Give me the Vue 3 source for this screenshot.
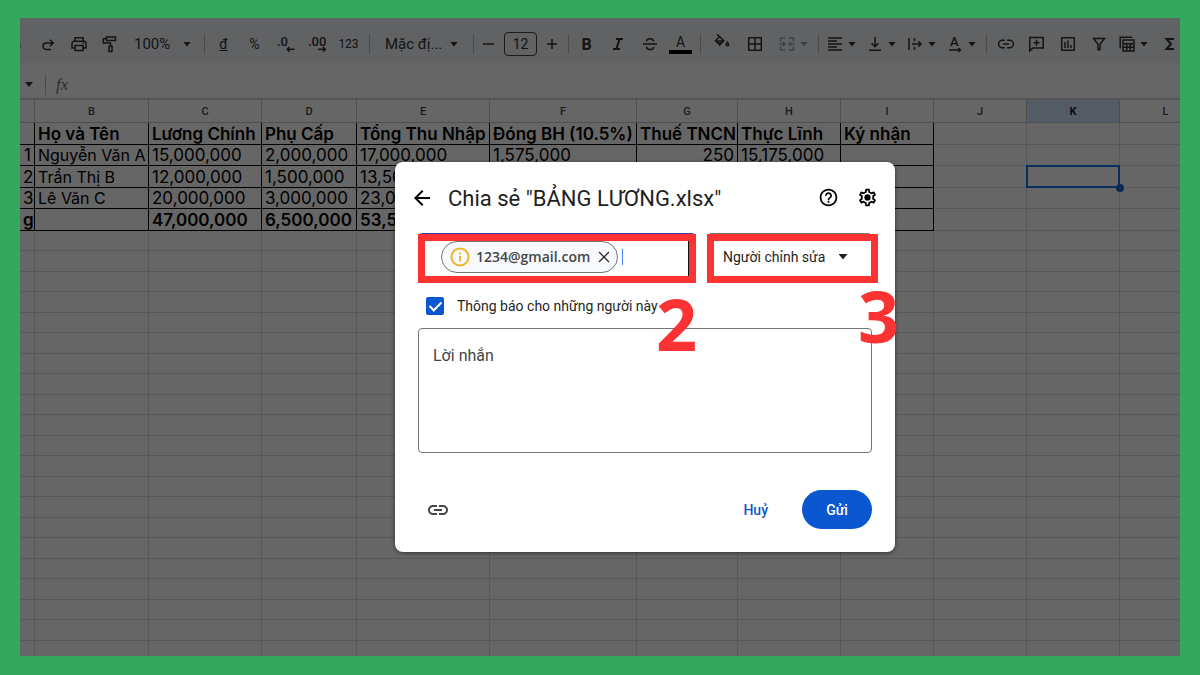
<script setup>
import { ref } from "vue";

const email = ref("");
const role = ref("editor");
const notify = ref(true);
const message = ref("");

// toolbar items, left to right
const tools = [
  { type: "icon", name: "undo", cls: "cut" },
  { type: "icon", name: "redo" },
  { type: "icon", name: "print" },
  { type: "icon", name: "paint" },
  { type: "menu", text: "100%", cls: "zoom" },
  { type: "sep" },
  { type: "text", text: "đ", cls: "currency" },
  { type: "text", text: "%" },
  { type: "icon", name: "decLess" },
  { type: "icon", name: "decMore" },
  { type: "text", text: "123", cls: "format" },
  { type: "sep" },
  { type: "menu", text: "Mặc đị...", cls: "family" },
  { type: "sep" },
  { type: "icon", name: "minus", cls: "step" },
  { type: "size" },
  { type: "icon", name: "plus", cls: "step" },
  { type: "sep" },
  { type: "text", text: "B", cls: "bold" },
  { type: "icon", name: "italic" },
  { type: "icon", name: "strike" },
  { type: "text", text: "A", cls: "color" },
  { type: "sep" },
  { type: "icon", name: "fill", cls: "fill" },
  { type: "icon", name: "borders" },
  { type: "drop", name: "merge", cls: "off" },
  { type: "sep" },
  { type: "drop", name: "align" },
  { type: "drop", name: "valign" },
  { type: "drop", name: "wrap" },
  { type: "drop", name: "rotate" },
  { type: "sep" },
  { type: "icon", name: "link" },
  { type: "icon", name: "comment" },
  { type: "icon", name: "chart" },
  { type: "icon", name: "filter" },
  { type: "drop", name: "table" },
  { type: "icon", name: "sigma" },
];

const icons = {
  undo: { d: "M5 9h6.5a3.2 3.2 0 0 1 0 6.4H7" },
  redo: { d: "M15 9H8.2a3.2 3.2 0 0 0 0 6.4H13M12 5.8 15.2 9 12 12.2" },
  print: { d: "M6 7V3.8h8V7M5.8 14H3V9.4A2.2 2.2 0 0 1 5.2 7.2h9.6A2.2 2.2 0 0 1 17 9.4V14h-2.8M6 11.5h8v5H6zM13.5 9.3h1.5" },
  paint: { d: "M6.5 3h9v3.4h-9zM6.5 4.7H3.3v4.4h7.2v3M9 12.2h3v5.4H9z" },
  decLess: { d: "M18.5 15.3h-7M13.5 13l-2.3 2.3 2.3 2.3", text: ".0" },
  decMore: { d: "M11 15.3h7M16 13l2.3 2.3-2.3 2.3", text: ".00" },
  minus: { d: "M4 10h11" },
  plus: { d: "M4 10h10M9 5v10" },
  italic: { d: "M7 5h7M4 15h7M10.6 5 7.4 15", w: 2 },
  strike: { d: "M3 10h14M13.6 7.4c-.2-1.8-1.6-2.7-3.5-2.7S6.7 5.6 6.6 7.3M6.5 12.8c.2 1.8 1.6 2.7 3.6 2.7s3.5-.9 3.5-2.6" },
  fill: { d: "M5 0 11.8 6.8 7.7 11 3.5 6.8 7.5 2.6M4 7h7.3L7.7 10.5zM6 9h3.5M15.5 8.3c-1 1.3-1.3 1.7-1.3 2.2a1.2 1.2 0 0 0 2.4 0c0-.5-.3-.9-1.1-2.2z" },
  borders: { d: "M3.7 3.7h12.6v12.6H3.7zM10 3.7v12.6M3.7 10h12.6" },
  merge: { d: "M8 4H3.5v3.5M8 16H3.5v-3.5M12 4h4.5v3.5M12 16h4.5v-3.5M2.5 10h5.2M6 8l2 2-2 2M17.5 10h-5.2M14 8l-2 2 2 2" },
  align: { d: "M3 4h14M3 7h9M3 10h14M3 13h9M3 16h14" },
  valign: { d: "M10 3v9.5M6.5 9.2l3.5 3.5 3.5-3.5M4 16.3h12" },
  wrap: { d: "M4 4v12M9.5 4v3.2M9.5 12.8V16M7 10h9M13.3 7.3 16 10l-2.7 2.7" },
  rotate: { d: "M4 16h11M13.3 14l2.2 2-2.2 2", text: "A" },
  link: { d: "M8.8 6.2H6.4a3.8 3.8 0 0 0 0 7.6h2.4M11.2 6.2h2.4a3.8 3.8 0 0 1 0 7.6h-2.4M7 10h6" },
  comment: { d: "M2.8 17V3.5h13.4v10.6H5.7zM9.5 5.8v6M6.5 8.8h6" },
  chart: { d: "M3.7 3.7h12.6v12.6H3.7zM7 8v6M10 6.5V14M13 11v3" },
  filter: { d: "M4.5 4.5h11L11 10.3v5.5H9v-5.5z" },
  table: { d: "M3.2 14.5V3.2h12M6 6h11v11H6zM6 9.7h11M6 13.3h11M9.7 9.7V17M13.3 9.7V17" },
  sigma: { d: "M14 5H6.5l4.5 5-4.5 5H14", w: 2 },
};

const columns = ["", "B", "C", "D", "E", "F", "G", "H", "I", "J", "K", "L"];

const rows = [
  ["", "Họ và Tên", "Lương Chính", "Phụ Cấp", "Tổng Thu Nhập", "Đóng BH (10.5%)", "Thuế TNCN", "Thực Lĩnh", "Ký nhận"],
  ["1", "Nguyễn Văn A", "15,000,000", "2,000,000", "17,000,000", "1,575,000", "250", "15,175,000", ""],
  ["2", "Trần Thị B", "12,000,000", "1,500,000", "13,500,000", "", "", "", ""],
  ["3", "Lê Văn C", "20,000,000", "3,000,000", "23,000,000", "", "", "", ""],
  ["g", "", "47,000,000", "6,500,000", "53,500,000", "", "", "", ""],
];
const emptyRows = 21;
</script>

<template>
  <div class="frame">
    <div class="stage">
      <div class="toolbar">
        <template v-for="(tool, i) in tools" :key="i">
          <span v-if="tool.type === 'sep'" class="sep"></span>
          <input v-else-if="tool.type === 'size'" class="size" value="12" aria-label="Cỡ chữ" />
          <button v-else class="tool" :class="[tool.type, tool.cls]" :aria-label="tool.name">
            <svg v-if="tool.name" viewBox="0 0 20 20" width="20" height="20" :stroke-width="icons[tool.name].w || 1.5">
              <text v-if="icons[tool.name].text" :x="tool.name === 'rotate' ? 5 : 1" y="12">{{ icons[tool.name].text }}</text>
              <path :d="icons[tool.name].d" />
            </svg>
            <span v-else>{{ tool.text }}</span>
            <i v-if="tool.type === 'menu' || tool.type === 'drop'" class="caret"></i>
          </button>
        </template>
      </div>

      <div class="formula">
        <i class="caret"></i>
        <span class="sep"></span>
        <span class="fx">fx</span>
      </div>

      <table class="sheet">
        <colgroup>
          <col v-for="n in 12" :key="n" :class="'c' + n" />
        </colgroup>
        <thead>
          <tr>
            <th v-for="col in columns" :key="col" :class="{ active: col === 'K' }">{{ col }}</th>
          </tr>
        </thead>
        <tbody class="data">
          <tr v-for="(row, r) in rows" :key="r">
            <td v-for="(cell, c) in row" :key="c" class="filled">{{ cell }}</td>
            <td></td>
            <td :class="{ selected: r === 2 }"></td>
            <td></td>
          </tr>
        </tbody>
        <tbody class="empty">
          <tr v-for="n in emptyRows" :key="n">
            <td v-for="c in 12" :key="c"></td>
          </tr>
        </tbody>
      </table>

      <div class="overlay">
        <form class="dialog" @submit.prevent>
          <header>
            <button type="button" class="plain" aria-label="Quay lại">
              <svg viewBox="0 0 24 24" width="24" height="24">
                <path d="M20 11H7.83l5.59-5.59L12 4l-8 8 8 8 1.41-1.41L7.83 13H20v-2z" />
              </svg>
            </button>
            <h1>Chia sẻ "BẢNG LƯƠNG.xlsx"</h1>
            <button type="button" class="plain" aria-label="Trợ giúp">
              <svg viewBox="0 0 24 24" width="21" height="21">
                <path d="M11 18h2v-2h-2v2zm1-16C6.48 2 2 6.48 2 12s4.48 10 10 10 10-4.48 10-10S17.52 2 12 2zm0 18c-4.41 0-8-3.59-8-8s3.59-8 8-8 8 3.59 8 8-3.59 8-8 8zm0-14c-2.21 0-4 1.79-4 4h2c0-1.1.9-2 2-2s2 .9 2 2c0 2-3 1.75-3 5h2c0-2.25 3-2.5 3-5 0-2.21-1.79-4-4-4z" />
              </svg>
            </button>
            <button type="button" class="plain" aria-label="Cài đặt">
              <svg viewBox="0 0 24 24" width="21" height="21">
                <path d="M19.43 12.98c.04-.32.07-.64.07-.98 0-.34-.03-.66-.07-.98l2.11-1.65c.19-.15.24-.42.12-.64l-2-3.46c-.09-.16-.26-.25-.44-.25-.06 0-.12.01-.17.03l-2.49 1c-.52-.4-1.08-.73-1.69-.98l-.38-2.65C14.46 2.18 14.25 2 14 2h-4c-.25 0-.46.18-.49.42l-.38 2.65c-.61.25-1.17.59-1.69.98l-2.49-1c-.06-.02-.12-.03-.18-.03-.17 0-.34.09-.43.25l-2 3.46c-.13.22-.07.49.12.64l2.11 1.65c-.04.32-.07.65-.07.98 0 .33.03.66.07.98l-2.11 1.65c-.19.15-.24.42-.12.64l2 3.46c.09.16.26.25.44.25.06 0 .12-.01.17-.03l2.49-1c.52.4 1.08.73 1.69.98l.38 2.65c.03.24.24.42.49.42h4c.25 0 .46-.18.49-.42l.38-2.65c.61-.25 1.17-.59 1.69-.98l2.49 1c.06.02.12.03.18.03.17 0 .34-.09.43-.25l2-3.46c.12-.22.07-.49-.12-.64l-2.11-1.65zm-1.98-1.71c.04.31.05.52.05.73 0 .21-.02.43-.05.73l-.14 1.13.89.7 1.08.84-.7 1.21-1.27-.51-1.04-.42-.9.68c-.43.32-.84.56-1.25.73l-1.06.43-.16 1.13-.2 1.35h-1.4l-.19-1.35-.16-1.13-1.06-.43c-.43-.18-.83-.41-1.23-.71l-.91-.7-1.06.43-1.27.51-.7-1.21 1.08-.84.89-.7-.14-1.13c-.03-.31-.05-.54-.05-.74s.02-.43.05-.73l.14-1.13-.89-.7-1.08-.84.7-1.21 1.27.51 1.04.42.9-.68c.43-.32.84-.56 1.25-.73l1.06-.43.16-1.13.2-1.35h1.39l.19 1.35.16 1.13 1.06.43c.43.18.83.41 1.23.71l.91.7 1.06-.43 1.27-.51.7 1.21-1.07.85-.89.7.14 1.13z" />
                <circle cx="12" cy="12" r="3.6" />
              </svg>
            </button>
          </header>

          <div class="fields">
            <div class="field people">
              <span class="chip">
                <svg viewBox="0 0 20 20" width="20" height="20" fill="none" stroke="#f2b52c" stroke-width="2">
                  <circle cx="10" cy="10" r="8.5" />
                  <path d="M10 9v5.5M10 5.5v2" />
                </svg>
                1234@gmail.com
                <button type="button" class="plain" aria-label="Xoá">
                  <svg viewBox="0 0 12 12" width="12" height="12" fill="none" stroke="#333" stroke-width="1.4">
                    <path d="M1 1l10 10M11 1 1 11" />
                  </svg>
                </button>
              </span>
              <input v-model="email" aria-label="Thêm người" />
              <b class="step-no">2</b>
            </div>
            <div class="field role">
              <select v-model="role" aria-label="Vai trò">
                <option value="editor">Người chỉnh sửa</option>
              </select>
              <i class="caret"></i>
              <b class="step-no">3</b>
            </div>
          </div>

          <label class="notify">
            <input v-model="notify" type="checkbox" />
            Thông báo cho những người này
          </label>

          <textarea v-model="message" placeholder="Lời nhắn" aria-label="Lời nhắn"></textarea>

          <footer>
            <button type="button" class="plain copy" aria-label="Sao chép đường liên kết">
              <svg viewBox="0 0 24 24" width="24" height="24">
                <path d="M3.9 12c0-1.71 1.39-3.1 3.1-3.1h4V7H7c-2.76 0-5 2.24-5 5s2.24 5 5 5h4v-1.9H7c-1.71 0-3.1-1.39-3.1-3.1zM8 13h8v-2H8v2zm9-6h-4v1.9h4c1.71 0 3.1 1.39 3.1 3.1s-1.39 3.1-3.1 3.1h-4V17h4c2.76 0 5-2.24 5-5s-2.24-5-5-5z" />
              </svg>
            </button>
            <button type="button" class="plain cancel">Huỷ</button>
            <button type="submit" class="send">Gửi</button>
          </footer>
        </form>
      </div>
    </div>
  </div>
</template>

<style>
body {
  margin: 0;
}
</style>

<style scoped>
* {
  box-sizing: border-box;
}
.frame {
  height: 100vh;
  padding: 18px 20px 19px;
  background: #34a85d;
  font-family: Roboto, "Liberation Sans", sans-serif;
}
.stage {
  position: relative;
  height: 100%;
  overflow: hidden;
  background: #fff;
}
button,
input,
select,
textarea {
  font: inherit;
  color: inherit;
  margin: 0;
  padding: 0;
  border: 0;
  background: none;
  outline: none;
}
button {
  cursor: pointer;
}

/* toolbar */
.toolbar {
  display: flex;
  align-items: center;
  height: 45px;
  padding-top: 7px;
  background: #f0f4f9;
  color: #333;
  font-size: 14px;
}
.toolbar > * {
  flex-shrink: 0;
}
.tool {
  display: flex;
  align-items: center;
  justify-content: center;
  width: 31px;
  height: 30px;
}
.tool svg {
  flex-shrink: 0;
  fill: none;
  stroke: currentColor;
}
.tool text {
  fill: currentColor;
  stroke: none;
  font-size: 13px;
  font-weight: 500;
}
.tool.cut {
  width: 12px;
}
.tool.cut svg {
  margin-left: -22px;
}
.tool.menu {
  justify-content: space-between;
  padding: 0 8px 0 9px;
  font-size: 15px;
}
.tool.zoom {
  width: 75px;
}
.tool.family {
  width: 96px;
  padding: 0 10px 0 12px;
}
.tool.format {
  width: 33px;
  font-size: 12px;
}
.tool.currency {
  text-decoration: underline;
}
.tool.step {
  width: 23px;
}
.tool.bold {
  padding-right: 2px;
  font-size: 16px;
  font-weight: 700;
}
.tool.color span {
  width: 23px;
  border-bottom: 4px solid #000;
  line-height: 16px;
}
.tool.fill {
  width: 35px;
}
.tool.drop {
  width: 40px;
  gap: 2px;
  justify-content: flex-start;
  padding: 0 5px 0 3px;
}
.tool.off {
  width: 44px;
  padding-left: 7px;
  color: #a0a2a5;
}
.size {
  width: 33px;
  height: 24px;
  margin: 0 4px;
  border: 1px solid #444;
  border-radius: 4px;
  text-align: center;
}
.sep {
  width: 8px;
  height: 20px;
  background: linear-gradient(#bbb, #bbb) center / 1px 100% no-repeat;
}
.caret {
  width: 10px;
  height: 5px;
  background: currentColor;
  clip-path: polygon(10% 0, 90% 0, 50% 100%);
}

/* formula bar */
.formula {
  display: flex;
  align-items: center;
  gap: 7px;
  height: 37px;
  padding: 8px 4px 0;
  border-bottom: 2px solid #d3d4d6;
  color: #333;
}
.fx {
  color: #777;
  font-family: "Liberation Serif", serif;
  font-size: 17px;
  font-style: italic;
}

/* sheet */
.sheet {
  width: calc(100% + 32px);
  table-layout: fixed;
  border-collapse: separate;
  border-spacing: 0;
  font-family: Inter, "Liberation Sans", sans-serif;
  font-size: 17px;
  line-height: 19px;
}
.c1 { width: 15px; }
.c2 { width: 114px; }
.c3 { width: 113px; }
.c4 { width: 95px; }
.c5 { width: 133px; }
.c6 { width: 147px; }
.c7 { width: 101px; }
.c8 { width: 103px; }
.c9,
.c10,
.c11 { width: 93px; }
.sheet th,
.sheet td {
  padding: 0 3px;
  border-right: 1px solid #dcdcdc;
  border-bottom: 1px solid #dcdcdc;
  white-space: nowrap;
}
.sheet th {
  height: 23px;
  border-color: #c4c7c5;
  color: #444;
  font-family: Roboto, sans-serif;
  font-size: 11px;
  font-weight: 500;
}
.sheet th.active {
  background: #d3e3fd;
  color: #041e49;
  font-weight: 700;
}
.data td {
  height: 22px;
  padding-top: 1px;
}
.data tr:nth-child(even) td {
  height: 21px;
}
.data .filled {
  border-color: #000;
}
.data td:first-child,
.data tr:not(:first-child) td:nth-child(7) {
  text-align: right;
}
.data tr:not(:first-child) td:nth-child(2) {
  font-size: 16px;
}
.data tr:first-child td,
.data tr:last-child td {
  font-weight: 600;
}
.empty td {
  height: 20px;
}
.empty tr:nth-child(even) td {
  height: 21px;
}
.data .selected {
  position: relative;
}
.selected::before {
  content: "";
  position: absolute;
  inset: -1px;
  border: 2px solid #1a73e8;
}
.selected::after {
  content: "";
  position: absolute;
  right: -5px;
  bottom: -5px;
  width: 8px;
  height: 8px;
  border-radius: 50%;
  background: #1a66d8;
}

/* dialog */
.overlay {
  position: absolute;
  inset: 0;
  display: flex;
  align-items: flex-start;
  justify-content: center;
  padding: 144px 0 0 90px;
  background: rgba(0, 0, 0, 0.6);
}
.dialog {
  width: 500px;
  padding: 0 23px 23px;
  border-radius: 8px;
  background: #fff;
  box-shadow: 0 1px 4px rgba(0, 0, 0, 0.5);
  color: #1f1f1f;
  font-size: 14px;
}
.plain {
  display: flex;
  align-items: center;
}
header {
  display: flex;
  align-items: center;
  gap: 18px;
  height: 71px;
  margin: 0 -6px 0 -8px;
}
h1 {
  flex: 1;
  margin: 0 0 0 -4px;
  padding-top: 2px;
  font-size: 22px;
  font-weight: 400;
}
.fields {
  display: grid;
  grid-template-columns: 278fr 165fr;
  gap: 11px;
}
.field {
  position: relative;
  display: flex;
  align-items: center;
  height: 50px;
  padding-bottom: 3px;
  border: 1px solid #747775;
  border-radius: 4px;
}
.field::after {
  content: "";
  position: absolute;
  inset: 0 -1px -1px -1px;
  border: 7px solid #fd3232;
  pointer-events: none;
}
.people {
  padding-left: 22px;
  border-color: #3f3fb5;
}
.people::after {
  box-shadow: inset -1px 0 #111;
}
.role::after {
  right: -7px;
}
.chip {
  display: flex;
  align-items: center;
  gap: 6px;
  height: 32px;
  padding: 0 7px 0 8px;
  border: 1px solid #747775;
  border-radius: 16px;
  background: #f8fafd;
  color: #444746;
  font-family: "Open Sans", sans-serif;
  font-weight: 600;
}
.chip .plain {
  margin-left: 2px;
}
.people input {
  flex: 1;
  width: 0;
  height: 16px;
  margin: 0 6px 0 4px;
  border-left: 1px solid #4285f4;
}
.role select {
  appearance: none;
  flex: 1;
  height: 100%;
  padding-left: 15px;
}
.role .caret {
  position: absolute;
  right: 22px;
  width: 12px;
  height: 6px;
  pointer-events: none;
}
.step-no {
  position: absolute;
  z-index: 1;
  color: #fd3232;
  font-family: "Open Sans", sans-serif;
  font-size: 72px;
  line-height: 72px;
}
.people .step-no {
  top: 53px;
  left: 237px;
}
.role .step-no {
  top: 45px;
  left: 150px;
}
.notify {
  display: flex;
  align-items: center;
  gap: 13px;
  height: 45px;
  padding: 1px 0 0 8px;
}
.notify input {
  appearance: none;
  display: flex;
  justify-content: center;
  width: 18px;
  height: 18px;
  border: 2px solid #0b57d0;
  border-radius: 2px;
}
.notify input:checked {
  background: #0b57d0;
}
.notify input:checked::after {
  content: "";
  width: 5px;
  height: 10px;
  border: solid #fff;
  border-width: 0 2px 2px 0;
  transform: rotate(45deg);
}
textarea {
  display: block;
  width: 100%;
  height: 125px;
  padding: 16px 14px;
  border: 1px solid #747775;
  border-radius: 4px;
  resize: none;
  font-size: 16px;
  line-height: 22px;
}
textarea::placeholder {
  color: #444746;
}
footer {
  display: flex;
  align-items: center;
  margin-top: 37px;
  font-weight: 500;
}
.copy {
  margin: 0 auto 0 8px;
}
.copy svg {
  fill: #444746;
}
.cancel {
  margin-right: 34px;
  color: #0b57d0;
}
.send {
  width: 70px;
  height: 39px;
  border-radius: 20px;
  background: #0b57d0;
  color: #fff;
}
</style>
